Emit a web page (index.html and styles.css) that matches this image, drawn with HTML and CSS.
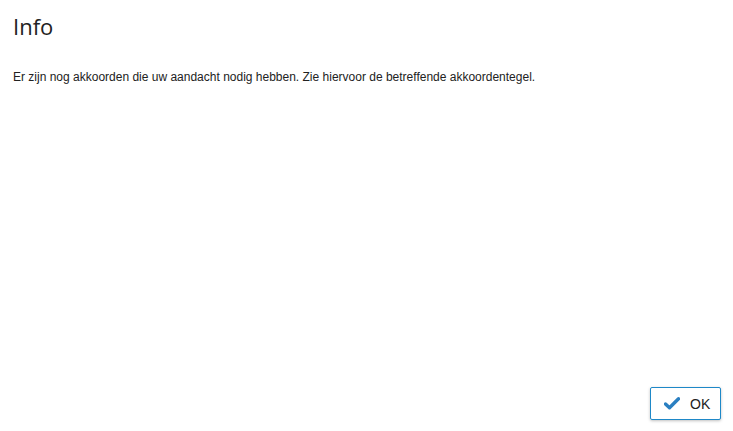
FILE: index.html
```html
<!DOCTYPE html>
<html lang="nl">
<head>
    <meta charset="UTF-8">
    <title>Info</title>
    <link rel="stylesheet" href="styles.css">
</head>
<body>
    <div class="dialog">
        <h1 class="title">Info</h1>
        <div class="content">
            Er zijn nog akkoorden die uw aandacht nodig hebben. Zie hiervoor de betreffende akkoordentegel.
        </div>
        <div class="footer">
            <button class="btn-ok">
                <svg class="check" width="16" height="13" viewBox="0 0 16 13">
                    <path d="M1.5 7 L5.5 10.8 L14.5 1.8" fill="none" stroke="#2a7fc1" stroke-width="3.4" stroke-linecap="round" stroke-linejoin="round"/>
                </svg>
                OK
            </button>
        </div>
    </div>
</body>
</html>
```

FILE: styles.css
```css
html, body {
    height: 100%;
}
body {
    margin: 0;
    background: #ffffff;
    color: #222222;
    font-family: 'Liberation Sans', Arial, sans-serif;
}
.dialog {
    display: flex;
    flex-direction: column;
    height: 100%;
    box-sizing: border-box;
    padding: 12px 12px 11px 13px;
}
.title {
    margin: 0;
    font-family: 'Open Sans', 'Segoe UI', sans-serif;
    font-weight: 400;
    font-size: 22px;
    line-height: 28px;
    color: #222222;
}
.content {
    margin-top: 30px;
    font-size: 12px;
    line-height: 15px;
}
.footer {
    margin-top: auto;
    display: flex;
    justify-content: flex-end;
}
.btn-ok {
    display: flex;
    align-items: center;
    gap: 10px;
    width: 71px;
    height: 33px;
    padding: 0 0 0 13px;
    border: 1px solid #1e88c8;
    border-radius: 2px;
    background: #ffffff;
    box-shadow: 0 1px 3px rgba(0, 0, 0, 0.25);
    font-family: 'Liberation Sans', Arial, sans-serif;
    font-size: 14px;
    color: #222222;
    cursor: pointer;
}
```
